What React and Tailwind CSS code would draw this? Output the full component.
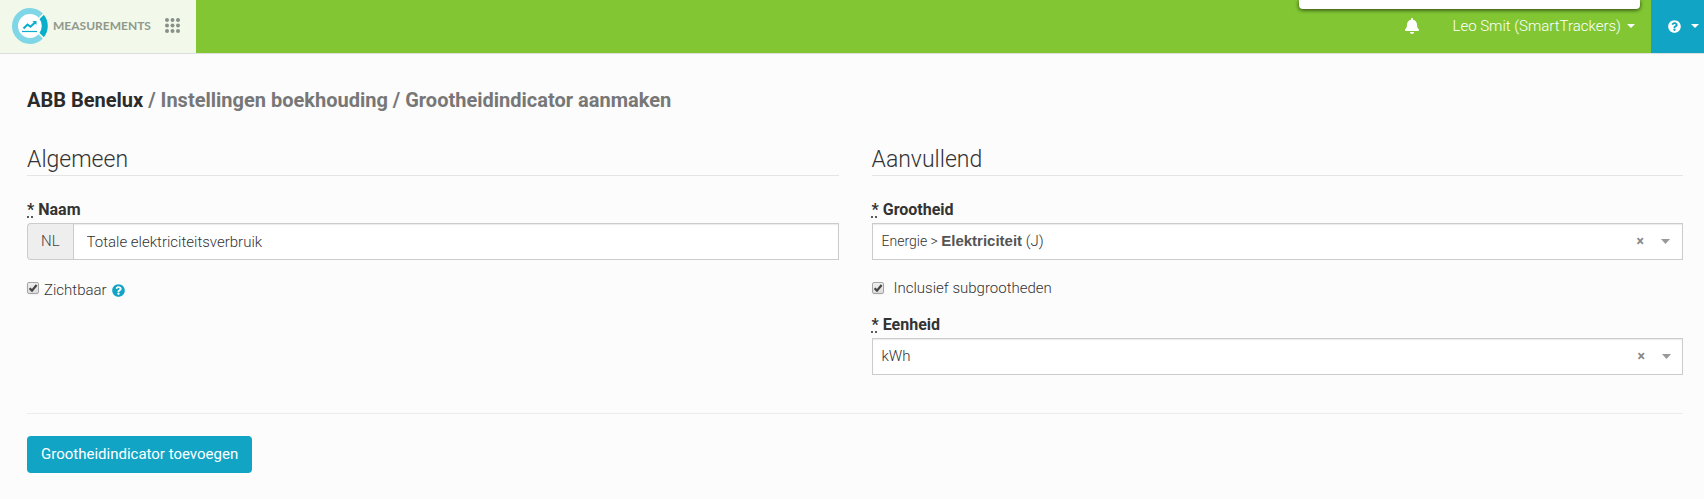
import React from "react";
import { FaBell, FaQuestionCircle } from "react-icons/fa";

function Logo() {
  return (
    <svg className="size-[38px] shrink-0" viewBox="0 0 38 38" aria-hidden="true">
      <circle cx="19" cy="19" r="13" fill="#fff" />
      <path d="M29.8 8.6 A15 15 0 1 0 29.8 29.4" fill="none" stroke="#7fd6e6" strokeWidth="6" />
      <path d="M30.3 9.4 A15 15 0 0 1 30.3 28.6" fill="none" stroke="#09aeca" strokeWidth="6" />
      <path d="M27.5 12 L34 5.6 M27.5 26 L34 32.4" stroke="#f2f9ea" strokeWidth="1.6" />
      <path d="M12.5 21.5 L16.5 17.5 L19.5 19.8 L24 15.5" fill="none" stroke="#09aeca" strokeWidth="2" />
      <path d="M21.5 14 H25.5 V18 Z" fill="#09aeca" />
      <path d="M11 24.5 H26" stroke="#09aeca" strokeWidth="1.2" />
    </svg>
  );
}

function AppsIcon() {
  const spots = [2, 7.5, 13];
  return (
    <svg className="size-[15px]" viewBox="0 0 15 15" fill="#87918a" aria-hidden="true">
      {spots.map((y) => spots.map((x) => <circle key={`${x}-${y}`} cx={x} cy={y} r="2" />))}
    </svg>
  );
}

function Caret() {
  return (
    <svg className="h-1 w-2 shrink-0" viewBox="0 0 8 4" fill="currentColor" aria-hidden="true">
      <path d="M0 0 H8 L4 4 Z" />
    </svg>
  );
}

function Required() {
  return <abbr title="verplicht" className="mr-1 underline decoration-dotted underline-offset-2">*</abbr>;
}

function FieldLabel({ htmlFor, children }) {
  return (
    <label htmlFor={htmlFor} className="block h-[23px] text-base leading-5 font-bold text-[#333]">
      <Required />
      {children}
    </label>
  );
}

function Section({ title, children }) {
  return (
    <section className="min-w-0 flex-1">
      <h2 className="mb-6 border-b border-[#e5e5e5] pt-[7px] pb-px text-[23px] leading-7 font-light text-[#333]">{title}</h2>
      {children}
    </section>
  );
}

function Check({ id, className = "" }) {
  return (
    <span className={`relative flex size-3 shrink-0 ${className}`}>
      <input
        id={id}
        type="checkbox"
        defaultChecked
        className="peer size-3 appearance-none rounded-xs border border-[#a5a5a5] bg-linear-to-b from-[#efefef] to-[#dcdcdc] shadow-xs"
      />
      <svg viewBox="0 0 12 12" className="pointer-events-none absolute inset-0 hidden size-3 peer-checked:block" aria-hidden="true">
        <path d="M2.6 6.2 L5 8.6 L9.6 3" fill="none" stroke="#444" strokeWidth="2.2" />
      </svg>
    </span>
  );
}

function SelectActions() {
  return (
    <div className="pointer-events-none absolute inset-y-0 right-3 flex items-center gap-[17px]">
      <button type="button" aria-label="Wissen" className="pointer-events-auto pb-px text-sm leading-4 font-bold text-[#888]">×</button>
      <svg className="h-[5px] w-[9px]" viewBox="0 0 9 5" fill="#999" aria-hidden="true"><path d="M0 0 H9 L4.5 5 Z" /></svg>
    </div>
  );
}

const box = "h-[37px] border border-[#ccc] bg-white shadow-[inset_0_1px_1px_rgba(0,0,0,0.08)]";

export default function App() {
  return (
    <div className="min-h-screen bg-[#fcfcfc] font-['Roboto','Liberation_Sans',sans-serif] text-[15px] text-[#333]">
      <header className="relative flex h-[54px] border-b border-[#dcdfe0] bg-[#82c733] text-white">
        <div className="flex w-[196px] items-center bg-[#f2f9ea] pr-4 pb-[2px] pl-[11px]">
          <a href="#start" className="flex items-center gap-1">
            <Logo />
            <span className="font-['Lato','Liberation_Sans',sans-serif] text-[12px] font-bold text-[#8f988c]">MEASUREMENTS</span>
          </a>
          <button type="button" aria-label="Apps" className="ml-auto"><AppsIcon /></button>
        </div>
        <nav className="ml-auto flex items-stretch">
          <button type="button" aria-label="Meldingen" className="px-7 pb-[2px]"><FaBell className="size-4" /></button>
          <button type="button" className="flex items-center gap-[6px] pr-4 pb-px pl-1">
            <span className="text-[15px] font-light">Leo Smit (SmartTrackers)</span>
            <Caret />
          </button>
          <button type="button" aria-label="Help" className="flex w-[53px] items-center justify-between bg-[#11a4c5] pr-[5px] pb-px pl-[17px]">
            <FaQuestionCircle className="size-[13px]" />
            <Caret />
          </button>
        </nav>
        <div className="absolute top-0 right-16 h-[9px] w-[341px] rounded-b bg-white shadow-[0_1px_4px_rgba(0,0,0,0.7)]" />
      </header>

      <main className="pt-8 pr-[21px] pb-6 pl-[27px]">
        <h1 className="text-[20px] leading-7 font-bold text-[#777]">
          <a href="#abb" className="text-[#2b2b2b]">ABB Benelux</a> / Instellingen boekhouding / Grootheidindicator aanmaken
        </h1>

        <form className="pt-[25px]">
          <div className="flex gap-[33px]">
            <Section title="Algemeen">
              <FieldLabel htmlFor="naam">Naam</FieldLabel>
              <div className="flex">
                <span className="flex h-[37px] items-center rounded-l border border-r-0 border-[#ccc] bg-[#eee] px-[13px] font-light text-[#444]">NL</span>
                <input id="naam" type="text" defaultValue="Totale elektriciteitsverbruik" className={`${box} min-w-0 flex-1 px-[13px] font-light text-[#333]`} />
              </div>
              <div className="mt-5 flex items-center gap-[5px]">
                <Check id="zichtbaar" className="-mt-1" />
                <label htmlFor="zichtbaar" className="leading-5 font-light">Zichtbaar</label>
                <FaQuestionCircle className="size-[13px] text-[#11a4c5]" />
              </div>
            </Section>

            <Section title="Aanvullend">
              <FieldLabel htmlFor="grootheid">Grootheid</FieldLabel>
              <div className={`${box} relative flex items-center px-[9px] text-[#333]`}>
                <span aria-hidden="true" className="font-light">
                  <span className="text-[14px]">Energie &gt; </span>
                  <b className="font-['Liberation_Sans',sans-serif] font-bold text-[#555]">Elektriciteit</b> (J)
                </span>
                <select id="grootheid" className="absolute inset-0 size-full opacity-0">
                  <option>Energie &gt; Elektriciteit (J)</option>
                </select>
                <SelectActions />
              </div>
              <div className="mt-[18px] flex items-center gap-[10px]">
                <Check id="sub" />
                <label htmlFor="sub" className="leading-5 font-light">Inclusief subgrootheden</label>
              </div>
              <div className="mt-[17px]">
                <FieldLabel htmlFor="eenheid">Eenheid</FieldLabel>
                <div className="relative">
                  <select id="eenheid" className={`${box} block w-full appearance-none px-[9px] font-light text-[#333]`}>
                    <option>kWh</option>
                  </select>
                  <SelectActions />
                </div>
              </div>
            </Section>
          </div>

          <hr className="mt-[38px] mb-[22px] border-[#ececec]" />
          <button type="submit" className="h-[37px] rounded bg-[#11a4c5] px-[14px] text-white">Grootheidindicator toevoegen</button>
        </form>
      </main>
    </div>
  );
}
